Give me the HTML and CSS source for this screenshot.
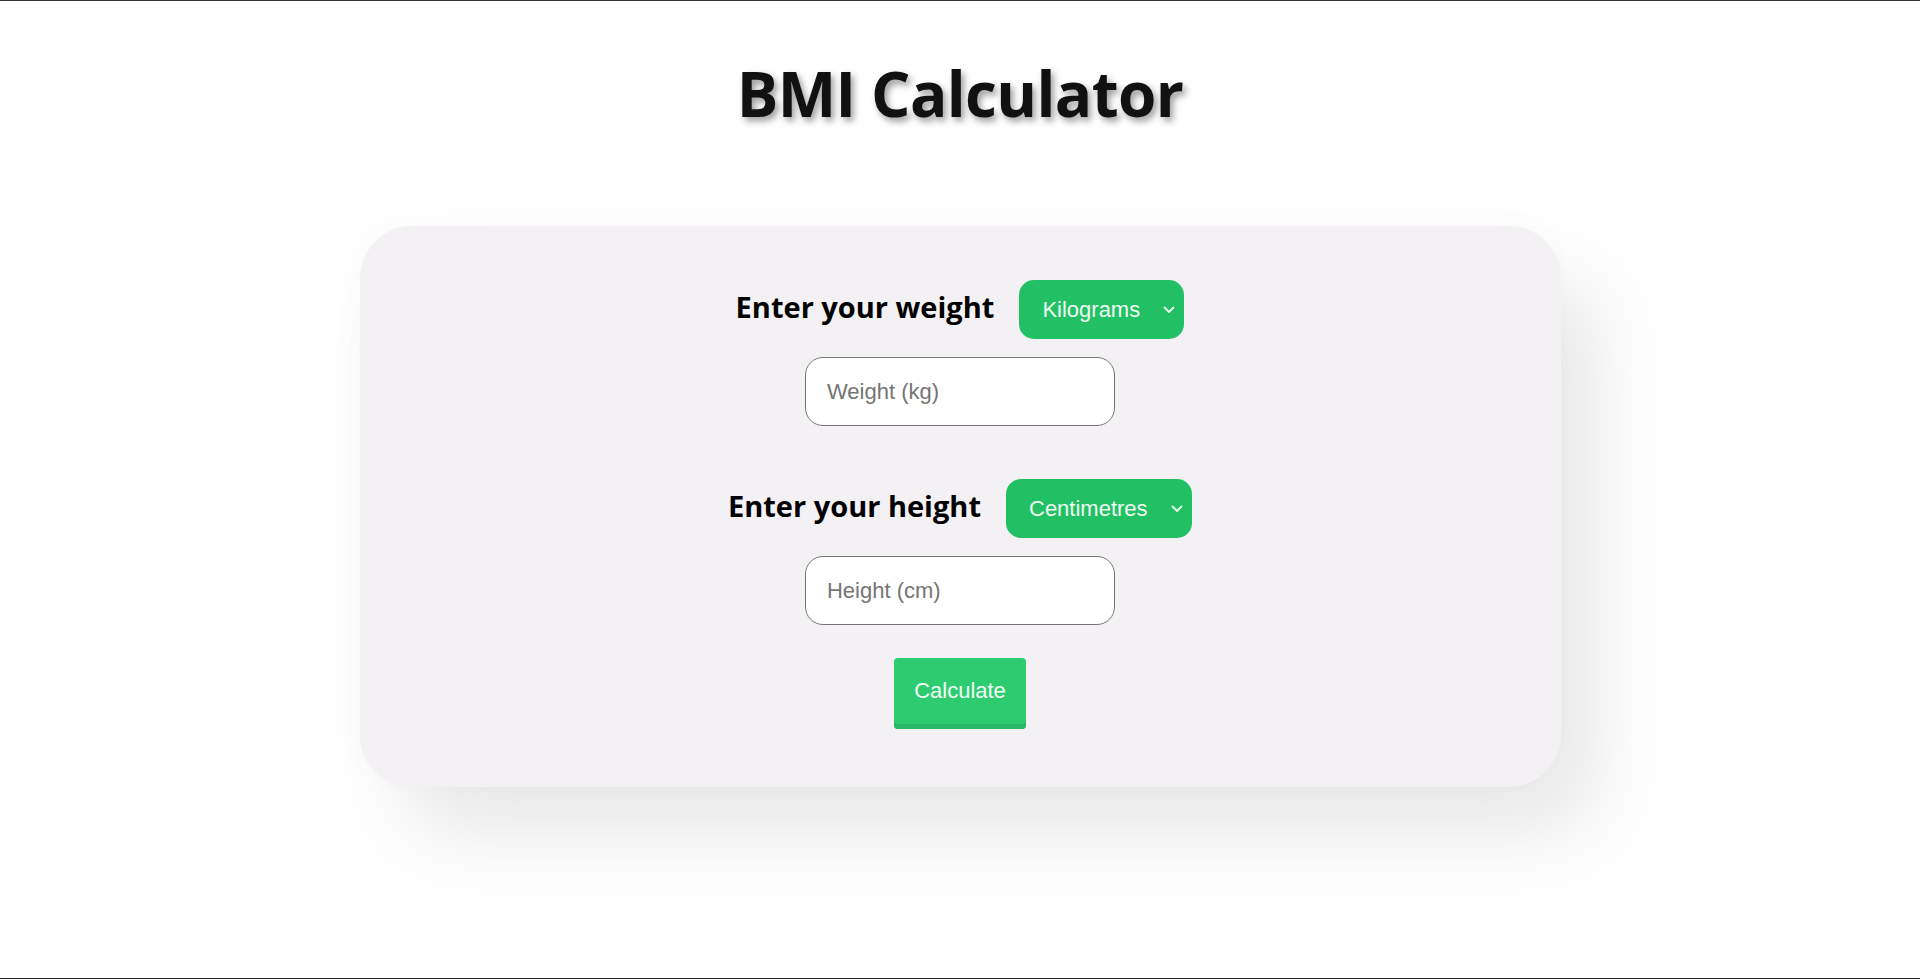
FILE: index.html
```html
<!DOCTYPE html>
<html lang="en">
<head>
<meta charset="utf-8">
<title>BMI Calculator</title>
<link rel="stylesheet" href="styles.css">
</head>
<body>
<main class="page">
  <h1 class="title">BMI Calculator</h1>
  <section class="card">
    <div class="field">
      <div class="field-head">
        <label class="field-label" for="weight">Enter your weight</label>
        <div class="select-wrap">
          <select class="unit-select">
            <option>Kilograms</option>
            <option>Pounds</option>
          </select>
          <svg class="chevron" viewBox="0 0 12 8" width="12" height="8"><path d="M1.5 1.5 L6 6 L10.5 1.5" fill="none" stroke="#e8fff0" stroke-width="1.8" stroke-linecap="round" stroke-linejoin="round"/></svg>
        </div>
      </div>
      <input class="text-input" id="weight" type="text" placeholder="Weight (kg)">
    </div>
    <div class="field field-second">
      <div class="field-head">
        <label class="field-label" for="height">Enter your height</label>
        <div class="select-wrap">
          <select class="unit-select">
            <option>Centimetres</option>
            <option>Feet</option>
          </select>
          <svg class="chevron" viewBox="0 0 12 8" width="12" height="8"><path d="M1.5 1.5 L6 6 L10.5 1.5" fill="none" stroke="#e8fff0" stroke-width="1.8" stroke-linecap="round" stroke-linejoin="round"/></svg>
        </div>
      </div>
      <input class="text-input" id="height" type="text" placeholder="Height (cm)">
    </div>
    <button class="calc-btn" type="button">Calculate</button>
  </section>
</main>
</body>
</html>
```
FILE: styles.css
```css
* { box-sizing: border-box; }
html, body { margin: 0; padding: 0; }
body {
  background: #ffffff;
  min-height: 979px;
  border-top: 1px solid #333333;
  border-bottom: 1px solid #222222;
  font-family: "Liberation Sans", Arial, sans-serif;
  color: #000;
}
.page {
  display: flex;
  flex-direction: column;
  align-items: center;
  padding-top: 50px;
}
.title {
  margin: 0;
  font-family: "Open Sans", "Noto Sans", sans-serif;
  font-weight: 700;
  font-size: 62px;
  letter-spacing: -0.6px;
  line-height: 84px;
  color: #111;
  text-shadow: 3px 4px 7px rgba(0, 0, 0, 0.4);
}
.card {
  margin-top: 91px;
  width: 1201px;
  height: 561px;
  background: #f3f1f3;
  border-radius: 52px;
  box-shadow: 40px 50px 80px rgba(0, 0, 0, 0.09), -6px -6px 30px rgba(0, 0, 0, 0.02);
  display: flex;
  flex-direction: column;
  align-items: center;
  padding-top: 54px;
}
.field {
  display: flex;
  flex-direction: column;
  align-items: center;
  gap: 18px;
}
.field-second { margin-top: 53px; }
.field-head {
  display: flex;
  align-items: center;
  gap: 25px;
}
.field-label {
  font-family: "Open Sans", "Noto Sans", sans-serif;
  font-weight: 700;
  font-size: 29px;
  margin-bottom: 6px;
}
.select-wrap { position: relative; }
.unit-select {
  appearance: none;
  -webkit-appearance: none;
  height: 59px;
  border: none;
  border-radius: 15px;
  background: #22c064;
  color: #eefcf2;
  font-family: "Liberation Sans", Arial, sans-serif;
  font-size: 22px;
  padding: 0 44px 0 23px;
  outline: none;
}
.chevron {
  position: absolute;
  right: 9px;
  top: 26px;
  pointer-events: none;
}
.text-input {
  width: 310px;
  height: 69px;
  border: 1px solid #767676;
  border-radius: 18px;
  background: #fff;
  padding: 0 21px;
  font-family: "Liberation Sans", Arial, sans-serif;
  font-size: 22px;
  outline: none;
}
.text-input::placeholder { color: #757575; }
.calc-btn {
  margin-top: 33px;
  width: 132px;
  height: 71px;
  border: none;
  border-radius: 4px;
  background: #2ecc71;
  box-shadow: inset 0 -5px 0 #29b866;
  color: #f2fff6;
  font-family: "Liberation Sans", Arial, sans-serif;
  font-size: 22px;
  padding: 0 0 6px;
}
```
